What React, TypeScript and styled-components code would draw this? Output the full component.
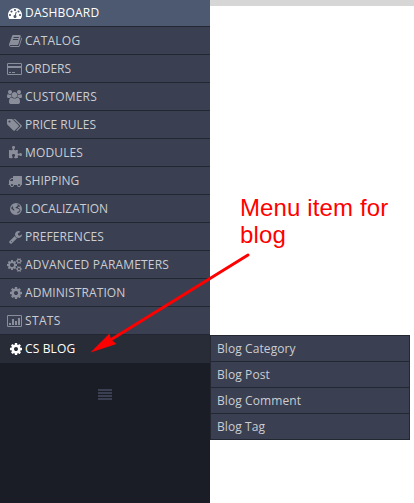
import React from "react";
import styled, { createGlobalStyle } from "styled-components";

const GlobalStyle = createGlobalStyle`
  body { margin: 0; background: #fff; overflow: hidden; }
`;

const Page = styled.div`
  position: relative;
  display: flex;
  width: 414px;
  height: 503px;
  overflow: hidden;
  background: #fff;
  font-family: "Open Sans", sans-serif;
`;

const Sidebar = styled.nav`
  display: flex;
  flex-direction: column;
  width: 210px;
  height: 503px;
  background: #1a1d25;
`;

const MenuRow = styled.a<{ $state?: "current" | "open" }>`
  box-sizing: border-box;
  display: flex;
  align-items: center;
  flex: none;
  height: 28px;
  padding-left: 6px;
  border-bottom: 1px solid ${(p) => (p.$state === "open" ? "#282c37" : "#232731")};
  background: ${(p) =>
    p.$state === "current" ? "#4d5970" : p.$state === "open" ? "#282c37" : "#3a3f51"};
  color: ${(p) => (p.$state ? "#fff" : "#8a8e9a")};
  &:first-child {
    height: 27px;
  }
`;

const IconSlot = styled.span`
  display: flex;
  justify-content: flex-end;
  width: 16px;
  margin-right: 3px;
`;

const Icon = styled.svg`
  display: block;
  flex: none;
  height: 14px;
  fill: currentColor;
`;

const MenuLabel = styled.span<{ $bright?: boolean; $tracking: number }>`
  font-size: 12px;
  line-height: 26px;
  letter-spacing: ${(p) => p.$tracking}px;
  white-space: nowrap;
  color: ${(p) => (p.$bright ? "#fff" : "#cbcdd2")};
`;

const Collapse = styled.button`
  align-self: center;
  display: flex;
  flex-direction: column;
  gap: 1px;
  width: 14px;
  margin-top: 26px;
  padding: 0;
  border: 0;
  background: none;
`;

const CollapseBar = styled.span`
  height: 2px;
  background: #3a3f51;
`;

const Main = styled.main`
  flex: 1;
  display: flex;
  flex-direction: column;
`;

const TopBar = styled.div`
  height: 6px;
  background: #d6d6d6;
`;

const SubMenu = styled.div`
  box-sizing: border-box;
  width: 200px;
  margin-top: 329px;
  border: 1px solid #232731;
  border-bottom: 0;
`;

const SubItem = styled.a`
  display: block;
  box-sizing: border-box;
  height: 26px;
  padding-left: 6px;
  border-bottom: 1px solid #232731;
  background: #3a3f51;
  color: #cbcdd2;
  font-size: 12px;
  letter-spacing: 0.09px;
  line-height: 25px;
`;

const Note = styled.div`
  position: absolute;
  left: 240px;
  top: 194px;
  color: #f00;
  font: 24px/27px "Liberation Sans", sans-serif;
  letter-spacing: 0.13px;
  white-space: nowrap;
`;

const Arrow = styled.svg`
  position: absolute;
  left: 80px;
  top: 240px;
`;

const smallGear = (y: number) =>
  `M1920 ${y}v140q0 16-149 31-12 27-30 52 51 113 51 138 0 4-4 7-122 71-124 71-8 0-46-47t-52-68q-20 2-30 2t-30-2q-14 21-52 68t-46 47q-2 0-124-71-4-3-4-7 0-25 51-138-18-25-30-52-149-15-149-31v-140q0-16 149-31 13-29 30-52-51-113-51-138 0-4 4-7 4-2 35-20t59-34 30-16q8 0 46 46.500t52 67.500q20-2 30-2t30 2q51-71 92-112l6-2q4 0 124 70 4 3 4 7 0 25-51 138 17 23 30 52 149 15 149 31z`;

const cog =
  "M1024 896q0-106-75-181t-181-75-181 75-75 181 75 181 181 75 181-75 75-181zm512-109v222q0 12-8 23t-20 13l-185 28q-19 54-39 91 35 50 107 138 10 12 10 25t-9 23q-27 37-99 108t-94 71q-12 0-26-9l-138-108q-44 23-91 38-16 136-29 186-7 28-36 28h-222q-14 0-24.500-8.500t-11.500-21.500l-28-184q-49-16-90-37l-141 107q-10 9-25 9-14 0-25-11-126-114-165-168-7-10-7-23 0-12 8-23 15-21 51-66.500t54-70.500q-27-50-41-99l-183-27q-13-2-21-12.500t-8-23.500v-222q0-12 8-23t19-13l186-28q14-46 39-92-40-57-107-138-10-12-10-24 0-10 9-23 26-36 98.500-107.500t94.500-71.500q13 0 26 10l138 107q44-23 91-38 16-136 29-186 7-28 36-28h222q14 0 24.500 8.500t11.500 21.500l28 184q49 16 90 37l142-107q9-9 24-9 13 0 25 10 129 119 165 170 7 8 7 22 0 12-8 23-15 21-51 66.500t-54 70.500q26 50 41 98l183 28q13 2 21 12.500t8 23.500z";

type IconDef = { w: number; d: string };

const icons: Record<string, IconDef> = {
  gauge: {
    w: 1792,
    d: "M384 1152q0-53-37.500-90.500t-90.500-37.500-90.500 37.500-37.500 90.500 37.500 90.500 90.500 37.500 90.500-37.500 37.500-90.500zm192-448q0-53-37.500-90.500t-90.500-37.500-90.500 37.500-37.500 90.500 37.500 90.500 90.500 37.500 90.500-37.500 37.500-90.500zm428 481l101-382q6-26-7.500-48.500t-38.500-29.500-48 6.500-30 39.500l-101 382q-60 5-107 43.500t-63 98.500q-20 77 20 146t117 89 146-20 89-117q16-60-6-117t-72-91zm660-33q0-53-37.500-90.500t-90.500-37.500-90.500 37.500-37.500 90.500 37.500 90.500 90.500 37.500 90.500-37.500 37.500-90.500zm-640-640q0-53-37.500-90.500t-90.500-37.500-90.500 37.500-37.500 90.500 37.500 90.500 90.500 37.500 90.500-37.500 37.500-90.500zm448 192q0-53-37.500-90.500t-90.500-37.500-90.500 37.500-37.500 90.500 37.500 90.500 90.500 37.500 90.500-37.500 37.500-90.500zm320 448q0 261-141 483-19 29-54 29h-1402q-35 0-54-29-141-221-141-483 0-182 71-348t191-286 286-191 348-71 348 71 286 191 191 286 71 348z",
  },
  book: {
    w: 1664,
    d: "M1639 478q40 57 18 129l-275 906q-19 64-76.500 107.500t-122.500 43.500h-923q-77 0-148.500-53.500t-99.500-131.500q-24-67-2-127 0-4 3-27t4-37q1-8-3-21.500t-3-19.500q2-11 8-21t16.500-23.500 16.500-23.500q23-38 45-91.500t30-91.500q3-10 .5-30t-.5-28q3-11 17-28t17-23q21-36 42-92t25-90q1-9-2.500-32t.5-28q4-13 22-30.500t22-22.500q19-26 42.500-84.500t27.500-96.500q1-8-3-25.500t-2-26.500q2-8 9-18t18-23 17-21q8-12 16.500-30.500t15-35 16-36 19.500-32 26.500-23.500 36-11.500 47.500 5.500l-1 3q38-9 51-9h761q74 0 114 56t18 130l-274 906q-36 119-71.500 153.500t-128.500 34.500h-869q-27 0-38 15-11 16-1 43 24 70 144 70h923q29 0 56-15.500t35-41.500l300-987q7-22 5-57 38 15 59 43zm-1064 2q-4 13 2 22.500t20 9.500h608q13 0 25.500-9.500t16.500-22.500l21-64q4-13-2-22.500t-20-9.500h-608q-13 0-25.500 9.500t-16.500 22.500zm-83 256q-4 13 2 22.500t20 9.500h608q13 0 25.500-9.500t16.500-22.500l21-64q4-13-2-22.500t-20-9.500h-608q-13 0-25.500 9.500t-16.500 22.500z",
  },
  card: {
    w: 1920,
    d: "M1760 128q66 0 113 47t47 113v1216q0 66-47 113t-113 47h-1600q-66 0-113-47t-47-113v-1216q0-66 47-113t113-47h1600zM160 256q-13 0-22.500 9.500t-9.500 22.500v224h1664v-224q0-13-9.500-22.500t-22.500-9.500h-1600zm1600 1280q13 0 22.500-9.500t9.500-22.500v-736h-1664v736q0 13 9.500 22.500t22.500 9.500h1600zM256 1408v-128h256v128h-256zm384 0v-128h384v128h-384z",
  },
  users: {
    w: 1920,
    d: "M593 896q-162 5-265 128h-134q-82 0-138-40.500t-56-118.500q0-353 124-353 6 0 43.500 21t97.500 42.500 119 21.500q67 0 133-23-5 37-5 66 0 139 81 256zm1071 637q0 120-73 189.500t-194 69.500h-874q-121 0-194-69.500t-73-189.500q0-53 3.500-103.500t14-109 26.500-108.500 43-97.500 62-81 85.500-53.500 111.500-20q10 0 43 21.500t73 48 107 48 135 21.500 135-21.500 107-48 73-48 43-21.500q61 0 111.500 20t85.500 53.500 62 81 43 97.500 26.500 108.500 14 109 3.500 103.500zm-1024-1277q0 106-75 181t-181 75-181-75-75-181 75-181 181-75 181 75 75 181zm704 384q0 159-112.500 271.500t-271.500 112.500-271.500-112.500-112.500-271.500 112.500-271.500 271.500-112.500 271.500 112.500 112.500 271.500zm576 225q0 78-56 118.500t-138 40.500h-134q-103-123-265-128 81-117 81-256 0-29-5-66 66 23 133 23 59 0 119-21.500t97.500-42.500 43.500-21q124 0 124 353zm-128-609q0 106-75 181t-181 75-181-75-75-181 75-181 181-75 181 75 75 181z",
  },
  tags: {
    w: 1920,
    d: "M448 448q0-53-37.500-90.500t-90.500-37.500-90.500 37.500-37.500 90.500 37.500 90.500 90.500 37.500 90.500-37.500 37.500-90.500zm1067 576q0 53-37 90l-491 492q-39 37-91 37-53 0-90-37l-715-716q-38-37-64.500-101t-26.500-117v-416q0-52 38-90t90-38h416q53 0 117 26.500t102 64.500l715 714q37 39 37 91zm384 0q0 53-37 90l-491 492q-39 37-91 37-36 0-59-14t-53-45l470-470q37-37 37-90 0-52-37-91l-715-714q-38-38-102-64.500t-117-26.500h224q53 0 117 26.500t102 64.500l715 714q37 39 37 91z",
  },
  puzzle: {
    w: 1664,
    d: "M1664 1098q0 81-44.500 135t-123.500 54q-41 0-77.500-17.500t-59-38-56.500-38-71-17.500q-110 0-110 124 0 39 16 115t15 115v5q-22 0-33 1-34 3-97.500 11.500t-115.500 13.500-98 5q-61 0-103-26.500t-42-83.500q0-37 17.500-71t38-56.500 38-59 17.500-77.500q0-79-54-123.500t-135-44.500q-84 0-143 45.500t-59 127.500q0 43 15 83t33.500 64.500 33.500 53 15 50.500q0 45-46 89-37 35-117 35-95 0-245-24-9-2-27.500-4t-27.500-4l-13-2q-1 0-3-1-2 0-2-1v-1024q2 1 17.500 3.500t34 5 21.500 3.500q150 24 245 24 80 0 117-35 46-44 46-89 0-22-15-50.500t-33.500-53-33.500-64.500-15-83q0-82 59-127.500t144-45.500q80 0 134 44.500t54 123.500q0 41-17.500 77.500t-38 59-38 56.500-17.500 71q0 57 42 83.500t103 26.500q64 0 180-15t163-17v2q-1 2-3.500 17.500t-5 34-3.500 21.500q-24 150-24 245 0 80 35 117 44 46 89 46 22 0 50.500-15t53-33.500 64.500-33.500 83-15q82 0 127.500 59t45.500 143z",
  },
  truck: {
    w: 1792,
    d: "M640 1408q0-52-38-90t-90-38-90 38-38 90 38 90 90 38 90-38 38-90zm-384-512h384v-256h-158q-13 0-22 9l-195 195q-9 9-9 22v30zm1280 512q0-52-38-90t-90-38-90 38-38 90 38 90 90 38 90-38 38-90zm256-1088v1024q0 15-4 26.500t-13.500 18.500-16.500 11.500-23.500 6-22.500 2-25.500 0-22.500-.5q0 106-75 181t-181 75-181-75-75-181h-384q0 106-75 181t-181 75-181-75-75-181h-64q-3 0-22.500.5t-25.500 0-22.500-2-23.500-6-16.500-11.500-13.500-18.500-4-26.500q0-26 19-45t45-19v-320q0-8-.5-35t0-38 2.500-34.500 6.500-37 14-30.500 22.500-30l198-198q19-19 50.500-32t58.500-13h160v-192q0-26 19-45t45-19h1024q26 0 45 19t19 45z",
  },
  globe: {
    w: 1536,
    d: "M768 128a768 768 0 1 1 0 1536a768 768 0 1 1 0-1536zM800 260L960 330L1010 450L900 560L760 640L700 780L850 800L1010 860L1170 920L1250 1040L1140 1180L980 1290L880 1480Q1200 1400 1340 1130L1270 940L1150 780L1060 790L1010 690L1120 580L1250 600L1290 500Q1110 290 800 260zM300 510Q150 700 170 900L330 960L480 1130L560 1060L530 930L420 850L400 700z",
  },
  wrench: {
    w: 1664,
    d: "M384 1472q0-26-19-45t-45-19-45 19-19 45 19 45 45 19 45-19 19-45zm644-420l-682 682q-37 37-90 37-52 0-91-37l-106-108q-38-36-38-90 0-53 38-91l681-681q39 98 114.500 173.500t173.500 114.500zm634-435q0 39-23 106-47 134-164.500 217.500t-258.500 83.500q-185 0-316.500-131.500t-131.500-316.500 131.500-316.500 316.500-131.500q58 0 121.500 16.500t107.500 46.500q16 11 16 28t-16 28l-293 169v224l193 107q5-3 79-48.500t135.500-81 70.500-35.500q15 0 23.500 10t8.500 25z",
  },
  cogs: {
    w: 1920,
    d:
      "M896 896q0-106-75-181t-181-75-181 75-75 181 75 181 181 75 181-75 75-181zm768 512q0-52-38-90t-90-38-90 38-38 90q0 53 37.500 90.500t90.500 37.500 90.500-37.500 37.500-90.500zm0-1024q0-52-38-90t-90-38-90 38-38 90q0 53 37.500 90.500t90.500 37.500 90.500-37.500 37.500-90.500zm-384 421v185q0 10-7 19.500t-16 10.500l-155 24q-11 35-32 76 34 48 90 115 7 11 7 20 0 12-7 19-23 30-82.500 89.500t-78.500 59.500q-11 0-21-7l-115-90q-37 19-77 31-11 108-23 155-7 24-30 24h-186q-11 0-20-7.500t-10-17.500l-23-153q-34-10-75-31l-118 89q-7 7-20 7-11 0-21-8-144-133-144-160 0-9 7-19 10-14 41-53t47-61q-23-44-35-82l-152-24q-10-1-17-9.500t-7-19.500v-185q0-10 7-19.500t16-10.500l155-24q11-35 32-76-34-48-90-115-7-11-7-20 0-12 7-20 22-30 82-89t79-59q11 0 21 7l115 90q34-18 77-32 11-108 23-154 7-24 30-24h186q11 0 20 7.500t10 17.500l23 153q34 10 75 31l118-89q8-7 20-7 11 0 21 8 144 133 144 160 0 8-7 19-12 16-42 54t-45 60q23 48 34 82l152 23q10 2 17 10.500t7 19.500z" +
      smallGear(1338) +
      smallGear(314),
  },
  cog: { w: 1536, d: cog },
  stats: {
    w: 1920,
    d: "M160 128h1600q160 0 160 160v1216q0 160-160 160h-1600q-160 0-160-160v-1216q0-160 160-160zM160 256q-32 0-32 32v1216q0 32 32 32h1600q32 0 32-32v-1216q0-32-32-32zM256 1152h256v256h-256zM640 640h256v768h-256zM1024 896h256v512h-256zM1408 512h256v896h-256z",
  },
};

const items: { label: string; icon: string; tracking: number; state?: "current" | "open" }[] = [
  { label: "DASHBOARD", icon: "gauge", tracking: 0.2, state: "current" },
  { label: "CATALOG", icon: "book", tracking: 0.25 },
  { label: "ORDERS", icon: "card", tracking: 0 },
  { label: "CUSTOMERS", icon: "users", tracking: 0.18 },
  { label: "PRICE RULES", icon: "tags", tracking: 0 },
  { label: "MODULES", icon: "puzzle", tracking: 0.14 },
  { label: "SHIPPING", icon: "truck", tracking: 0 },
  { label: "LOCALIZATION", icon: "globe", tracking: 0 },
  { label: "PREFERENCES", icon: "wrench", tracking: 0.08 },
  { label: "ADVANCED PARAMETERS", icon: "cogs", tracking: 0.18 },
  { label: "ADMINISTRATION", icon: "cog", tracking: 0.07 },
  { label: "STATS", icon: "stats", tracking: 0.35 },
  { label: "CS BLOG", icon: "cog", tracking: 0.14, state: "open" },
];

const subItems = ["Blog Category", "Blog Post", "Blog Comment", "Blog Tag"];

function MenuIcon({ name }: { name: string }) {
  const { w, d } = icons[name];
  return (
    <Icon viewBox={`0 0 ${w} 1792`} width={(w / 1792) * 14} aria-hidden>
      <path d={d} fillRule="evenodd" />
    </Icon>
  );
}

export default function App() {
  return (
    <Page>
      <GlobalStyle />
      <Sidebar>
        {items.map((item) => (
          <MenuRow key={item.label} $state={item.state}>
            <IconSlot>
              <MenuIcon name={item.icon} />
            </IconSlot>
            <MenuLabel $bright={!!item.state} $tracking={item.tracking}>
              {item.label}
            </MenuLabel>
          </MenuRow>
        ))}
        <Collapse aria-label="Collapse menu">
          <CollapseBar />
          <CollapseBar />
          <CollapseBar />
          <CollapseBar />
        </Collapse>
      </Sidebar>
      <Main>
        <TopBar />
        <SubMenu>
          {subItems.map((label) => (
            <SubItem key={label}>{label}</SubItem>
          ))}
        </SubMenu>
      </Main>
      <Note>
        Menu item for
        <br />
        blog
      </Note>
      <Arrow width="180" height="120" viewBox="80 240 180 120" aria-hidden>
        <path d="M248 255L108 341.500" stroke="#f00" strokeWidth="3" strokeLinecap="round" />
        <path d="M90.500 352.500L109.500 333.500L111 339.500L116.500 344z" fill="#f00" />
      </Arrow>
    </Page>
  );
}
